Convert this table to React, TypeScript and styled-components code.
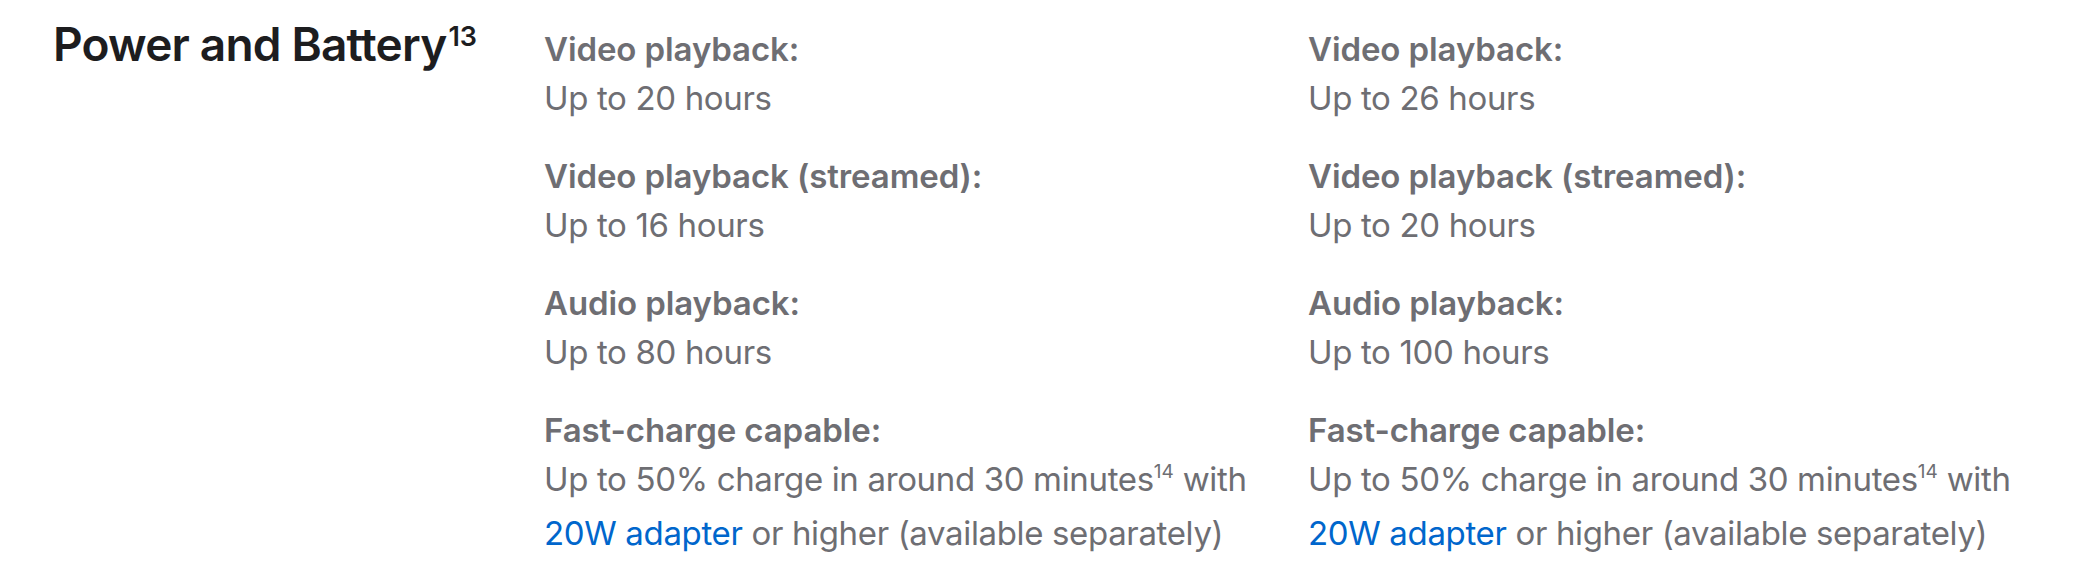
import React from "react";
import styled, { createGlobalStyle } from "styled-components";

const Global = createGlobalStyle`
  html, body { margin: 0; padding: 0; background: #fff; }
  body { font-family: Inter, "Noto Sans", "Liberation Sans", sans-serif; -webkit-font-smoothing: antialiased; }
`;

const Section = styled.section`
  display: grid;
  grid-template-columns: 491px 764px 764px;
  padding: 14px 0 0 53px;
`;

const Heading = styled.h2`
  margin: 0;
  padding-top: 2px;
  font-size: 46px;
  line-height: 56px;
  font-weight: 600;
  letter-spacing: -0.8px;
  color: #1d1d1f;
`;

const HeadSup = styled.sup`
  font-size: 27px;
  font-weight: 600;
  vertical-align: 0;
  position: relative;
  top: -15px;
  margin-left: 2px;
  letter-spacing: 0;
`;

const Column = styled.div`
  display: flex;
  flex-direction: column;
  gap: 29px;
  padding-top: 11px;
`;

const Group = styled.div`
  display: flex;
  flex-direction: column;
  color: #6e6e73;
  font-size: 33px;
  line-height: 49px;
`;

const Label = styled.div`
  font-weight: 600;
  letter-spacing: -0.1px;
`;

const Value = styled.div`
  font-weight: 400;
  letter-spacing: -0.35px;
`;

const Sup = styled.sup`
  font-size: 19px;
  vertical-align: 0;
  position: relative;
  top: -13px;
  letter-spacing: 0;
`;

const Link = styled.a`
  color: #0066cc;
  text-decoration: none;
`;

type Spec = { label: string; value: React.ReactNode };

const charge = (
  <>
    Up to 50% charge in around 30 minutes<Sup>14</Sup> with
    <br />
    <Link href="#">20W adapter</Link> or higher (available separately)
  </>
);

const left: Spec[] = [
  { label: "Video playback:", value: "Up to 20 hours" },
  { label: "Video playback (streamed):", value: "Up to 16 hours" },
  { label: "Audio playback:", value: "Up to 80 hours" },
  { label: "Fast-charge capable:", value: charge },
];

const right: Spec[] = [
  { label: "Video playback:", value: "Up to 26 hours" },
  { label: "Video playback (streamed):", value: "Up to 20 hours" },
  { label: "Audio playback:", value: "Up to 100 hours" },
  { label: "Fast-charge capable:", value: charge },
];

const SpecColumn = ({ items }: { items: Spec[] }) => (
  <Column>
    {items.map((s, i) => (
      <Group key={i}>
        <Label>{s.label}</Label>
        <Value>{s.value}</Value>
      </Group>
    ))}
  </Column>
);

export default function App() {
  return (
    <>
      <Global />
      <Section>
        <Heading>
          Power and Battery<HeadSup>13</HeadSup>
        </Heading>
        <SpecColumn items={left} />
        <SpecColumn items={right} />
      </Section>
    </>
  );
}
